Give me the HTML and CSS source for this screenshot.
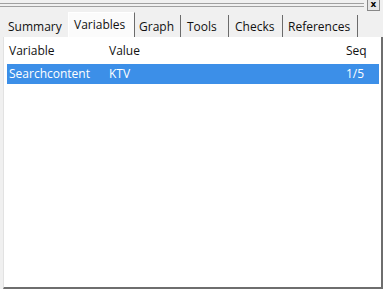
FILE: index.html
```html
<!DOCTYPE html>
<html lang="en">
<head>
    <meta charset="UTF-8">
    <title>Variables</title>
    <link rel="stylesheet" href="styles.css">
</head>
<body>
    <div class="window">
        <div class="titlebar">
            <div class="grip"></div>
            <div class="close">x</div>
        </div>
        <div class="tabs">
            <div class="tab tab-summary">Summary</div>
            <div class="tab tab-variables active">Variables</div>
            <div class="tab tab-graph">Graph</div>
            <div class="tab tab-tools">Tools</div>
            <div class="tab tab-checks">Checks</div>
            <div class="tab tab-refs">References</div>
        </div>
        <div class="panel">
            <div class="row head">
                <span class="col-name">Variable</span>
                <span class="col-value">Value</span>
                <span class="col-seq">Seq</span>
            </div>
            <div class="row selected">
                <span class="col-name">Searchcontent</span>
                <span class="col-value">KTV</span>
                <span class="col-seq">1/5</span>
            </div>
        </div>
    </div>
</body>
</html>
```

FILE: styles.css
```css
body {
    margin: 0;
    background-color: #f0f0f0;
    font-family: 'Open Sans', 'Noto Sans', sans-serif;
    font-size: 12px;
    color: #111;
}
.window {
    width: 383px;
    height: 289px;
    display: flex;
    flex-direction: column;
}
.titlebar {
    height: 11px;
    display: flex;
    align-items: flex-start;
}
.grip {
    flex: 1;
    height: 2px;
    margin-top: 3px;
    border-top: 1px solid #a0a0a0;
    border-bottom: 1px solid #a0a0a0;
    margin-right: 3px;
}
.close {
    width: 13px;
    height: 11px;
    margin-right: 3px;
    border: 1px solid #888;
    border-top: none;
    box-sizing: border-box;
    background: #e6e6e6;
    font-family: 'DejaVu Sans', sans-serif;
    font-weight: bold;
    font-size: 9px;
    line-height: 9px;
    text-align: center;
    color: #000;
}
.tabs {
    display: flex;
    align-items: flex-end;
    height: 26px;
    padding-left: 3px;
}
.tab {
    height: 22px;
    line-height: 23px;
    padding-left: 5px;
    border-right: 1px solid #6b6b6b;
    box-sizing: border-box;
    color: #111;
    white-space: nowrap;
}
.tab-summary {
    width: 65px;
    border-right: none;
}
.tab-variables {
    width: 67px;
}
.tab-graph {
    width: 46px;
    padding-left: 4px;
}
.tab-tools {
    width: 48px;
    padding-left: 6px;
}
.tab-checks {
    width: 54px;
    padding-left: 6px;
}
.tab-refs {
    width: 75px;
}
.tab.active {
    height: 25px;
    line-height: 24px;
    background: #fbfbfb;
    border-left: 1px solid #fff;
    border-top: 1px solid #fff;
}
.panel {
    flex: 1;
    background: #ffffff;
    margin-left: 3px;
    border-left: 1px solid #e2e2e2;
    border-right: 2px solid #6e6e6e;
    border-bottom: 2px solid #6e6e6e;
    padding: 3px 2px 0 3px;
}
.row {
    display: flex;
    height: 20px;
    line-height: 20px;
    padding-left: 2px;
}
.row.head {
    height: 22px;
    line-height: 22px;
    margin-bottom: 2px;
}
.row.selected {
    background: #3c8fe8;
    color: #ffffff;
}
.col-name {
    width: 100px;
}
.col-value {
    flex: 1;
}
.col-seq {
    width: 33px;
}
```
